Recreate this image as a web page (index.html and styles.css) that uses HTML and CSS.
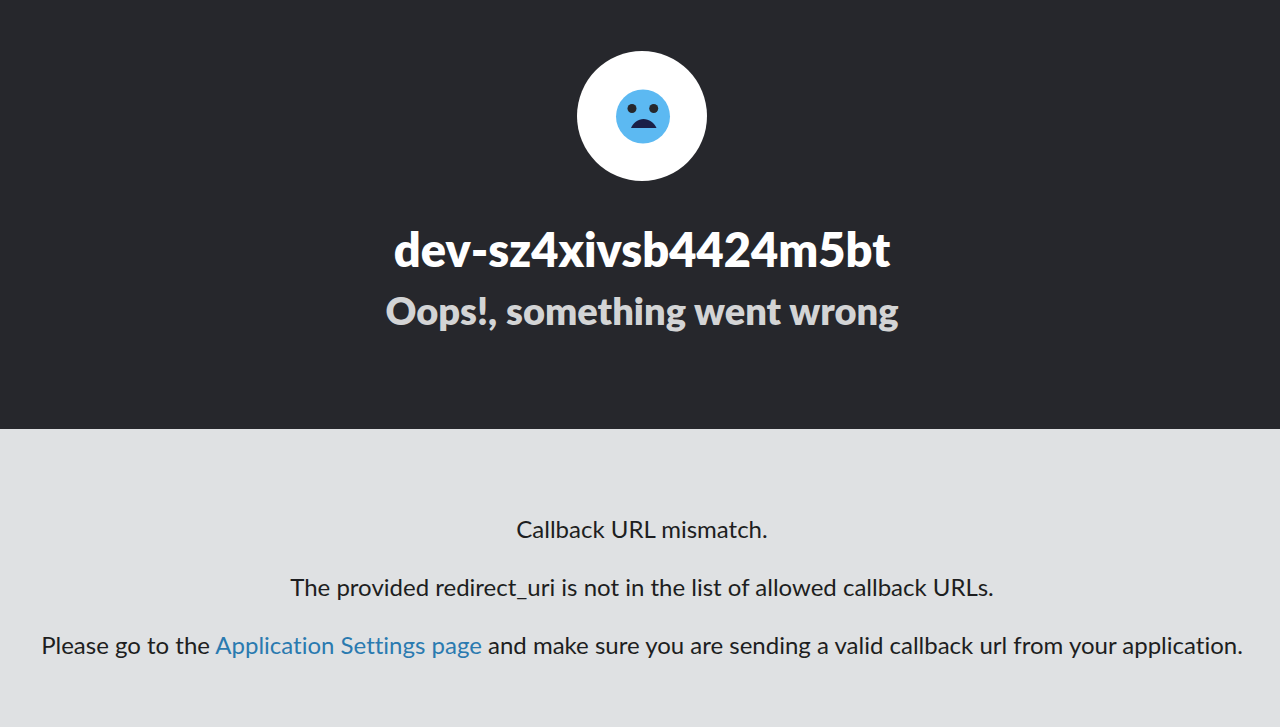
FILE: index.html
```html
<!DOCTYPE html>
<html lang="en">
<head>
  <meta charset="UTF-8" />
  <meta name="viewport" content="width=device-width, initial-scale=1.0"/>
  <title>Oops!, something went wrong</title>
  <link rel="stylesheet" href="styles.css">
</head>
<body>
  <header class="error-header">
    <svg class="badge" viewBox="0 0 130 130" aria-hidden="true">
      <circle cx="65" cy="65" r="65" fill="#ffffff" />
      <circle cx="66" cy="65.500" r="27" fill="#5cb9f2" />
      <circle cx="55" cy="57.500" r="4.500" fill="#26272c" />
      <circle cx="76.700" cy="57.500" r="4.500" fill="#26272c" />
      <path d="M54 77 C56.500 71.500 61 68 66.500 68 C72 68 77 71.500 79.500 77 Z" fill="#1a1f47" />
    </svg>
    <h1>dev-sz4xivsb4424m5bt</h1>
    <h2>Oops!, something went wrong</h2>
  </header>

  <main class="error-details">
    <p>Callback URL mismatch.</p>
    <p>The provided redirect_uri is not in the list of allowed callback URLs.</p>
    <p>Please go to the <a href="#">Application Settings page</a> and make sure you are sending a valid callback url from your application.</p>
  </main>
</body>
</html>
```
FILE: styles.css
```css
body {
  margin: 0;
  background-color: #dfe1e3;
  color: #1d1e21;
  font-family: "Avenir Next", Lato, sans-serif;
  font-variant-ligatures: none;
  text-align: center;
}

.error-header {
  padding: 51px 16px 88px 20px;
  background-color: #26272c;
}

.badge {
  display: block;
  width: 130px;
  height: 130px;
  margin: 0 auto 38px;
}

h1,
h2 {
  margin: 0;
  font-weight: 800;
}

h1 {
  color: #ffffff;
  font-size: 47px;
  line-height: 60px;
}

h2 {
  color: #d3d4d5;
  font-size: 38px;
  line-height: 62px;
}

.error-details {
  padding: 85px 12px 52px 16px;
  font-size: 24px;
  line-height: 29px;
}

.error-details p {
  margin: 0 0 29px;
}

.error-details a {
  color: #2a7ab0;
  text-decoration: none;
}
```
